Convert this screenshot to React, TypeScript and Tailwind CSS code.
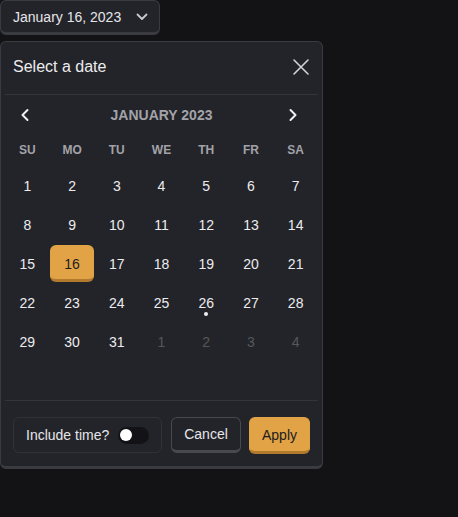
import React from "react";

const days: { n: number; muted?: boolean; selected?: boolean; dot?: boolean }[] = [];
for (let i = 1; i <= 31; i++) days.push({ n: i, selected: i === 16, dot: i === 26 });
for (let i = 1; i <= 4; i++) days.push({ n: i, muted: true });

const weekdays = ["SU", "MO", "TU", "WE", "TH", "FR", "SA"];

export default function App() {
  return (
    <div
      className="min-h-[517px] w-[458px] bg-[#131316] text-[#ececef]"
      style={{ fontFamily: '"Liberation Sans", Arial, sans-serif' }}
    >
      <div className="flex flex-col items-start">
        {/* Trigger */}
        <button className="flex h-[35px] w-[160px] items-center justify-between rounded-md border border-b-[3px] border-[#3a3b41] bg-[#232429] pl-[12px] pr-[11px] text-[14px] text-[#e6e6e9]">
          <span className="leading-none">January 16, 2023</span>
          <svg width="12" height="8" viewBox="0 0 12 8" fill="none">
            <path d="M1.5 1.5 L6 6 L10.5 1.5" stroke="#c9c9cd" strokeWidth="1.8" strokeLinecap="round" strokeLinejoin="round" />
          </svg>
        </button>

        {/* Panel */}
        <div className="mt-[6px] flex w-[323px] flex-col rounded-md border border-b-[3px] border-[#3a3b41] bg-[#232429] px-[4px]">
          {/* Header */}
          <div className="flex h-[52px] items-center justify-between pb-[2px] pl-[8px] pr-[7px]">
            <span className="text-[16px] leading-none text-[#ececef]">Select a date</span>
            <svg width="20" height="20" viewBox="0 0 20 20" fill="none">
              <path d="M3 3 L17 17 M17 3 L3 17" stroke="#d2d2d6" strokeWidth="1.6" strokeLinecap="round" />
            </svg>
          </div>
          <div className="h-px bg-[#34353a]" />

          {/* Month nav */}
          <div className="flex h-[40px] items-center justify-between pl-[14px] pr-[19px]">
            <svg width="12" height="14" viewBox="0 0 12 14" fill="none">
              <path d="M8.5 2 L3.5 7 L8.5 12" stroke="#f0f0f2" strokeWidth="2" strokeLinecap="round" strokeLinejoin="round" />
            </svg>
            <span className="pl-[5px] text-[14px] font-bold leading-none text-[#a2a2a8]">JANUARY 2023</span>
            <svg width="12" height="14" viewBox="0 0 12 14" fill="none">
              <path d="M3.5 2 L8.5 7 L3.5 12" stroke="#f0f0f2" strokeWidth="2" strokeLinecap="round" strokeLinejoin="round" />
            </svg>
          </div>

          {/* Weekdays */}
          <div className="grid h-[30px] grid-cols-7 items-center">
            {weekdays.map((w) => (
              <span key={w} className="text-center text-[12px] font-bold leading-none text-[#a2a2a8]">
                {w}
              </span>
            ))}
          </div>

          {/* Days */}
          <div className="mt-[2px] grid grid-cols-7 grid-rows-[repeat(6,37px)] gap-y-[2px]">
            {days.map((d, i) => (
              <div
                key={i}
                className={
                  d.selected
                    ? "relative flex h-[37px] items-center justify-center rounded-md border-b-[3px] border-[#b27a2c] bg-[#e2a246] pt-[3px] text-[14px] text-[#1c1c1e]"
                    : d.muted
                    ? "relative flex h-[37px] items-center justify-center text-[14px] text-[#56575c]"
                    : "relative flex h-[37px] items-center justify-center text-[14px] text-[#ececef]"
                }
              >
                <span className="leading-none">{d.n}</span>
                {d.dot && (
                  <span className="absolute left-1/2 top-[28px] h-[4px] w-[4px] -translate-x-1/2 rounded-full bg-[#f0f0f2]" />
                )}
              </div>
            ))}
          </div>

          <div className="mt-[1px] h-px bg-[#34353a]" />

          {/* Footer */}
          <div className="flex items-start pb-[12px] pl-[8px] pr-[8px] pt-[16px]">
            <div className="flex h-[36px] w-[149px] items-center justify-between rounded-md border border-[#313237] pl-[12px] pr-[12px]">
              <span className="text-[14px] leading-none text-[#e6e6e9]">Include time?</span>
              <span className="relative h-[17px] w-[31px] rounded-full bg-[#131317]">
                <span className="absolute left-[2px] top-[2.5px] h-[12px] w-[12px] rounded-full bg-white" />
              </span>
            </div>
            <button className="ml-[9px] flex h-[36px] w-[70px] items-center justify-center rounded-md border border-b-[3px] border-[#48494e] bg-[#232429] text-[14px] text-[#e6e6e9]">
              <span className="leading-none">Cancel</span>
            </button>
            <button className="ml-[8px] flex h-[37px] w-[61px] items-center justify-center rounded-md border border-b-[3px] border-[#e2a246] border-b-[#b27a2c] bg-[#e2a246] pt-[1px] text-[14px] text-[#1c1c1e]">
              <span className="leading-none">Apply</span>
            </button>
          </div>
        </div>
      </div>
    </div>
  );
}
